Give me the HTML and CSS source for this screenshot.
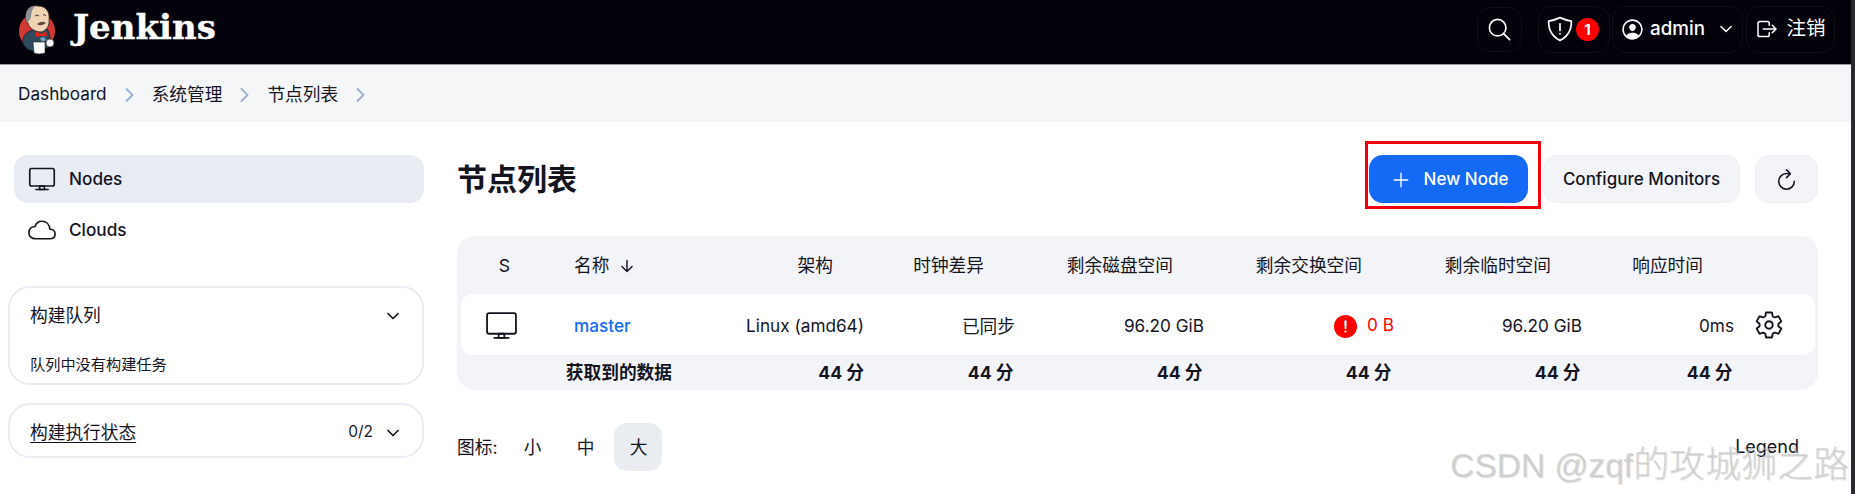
FILE: index.html
```html
<!DOCTYPE html>
<html lang="zh">
<head>
<meta charset="utf-8">
<title>节点列表 - Jenkins</title>
<link rel="stylesheet" href="styles.css">
</head>
<body>
<div class="app">
  <header class="topbar">
    <a class="brand">
      <svg class="logo" viewBox="15 0 45 56">
        <circle cx="37" cy="30" r="18" fill="#d33833"/>
        <path d="M23 43C22 35 27 30 33 29L47 28C50 32 51 39 49 46L36 51L27 48Z" fill="#2f4a5c" stroke="#15212b" stroke-width=".8"/>
        <path d="M26 17C25 8 31 4 38 5C46 5 50 11 49 18C50 25 46 30 41 31C35 31 29 27 28 22C26 21 26 19 26 17Z" fill="#efd3b4" stroke="#2a2320" stroke-width=".8"/>
        <path d="M26 18C25 9 30 5 35 5C32 8 31 12 31 16L29 20L27 21Z" fill="#8b8f93"/>
        <path d="M35 15q2-2 4 0M43 14q2-1 3 1" fill="none" stroke="#2a2320" stroke-width=".9"/>
        <path d="M37 23q5-4 9-1q-3 2-4 2q-3 1-5-1Z" fill="#5d4a3c"/>
        <path d="M36 30L41 33L46 30L47 35L41 35L36 36Z" fill="#e2231a"/>
        <path d="M40 37l4-1 2 3-4 2Z" fill="#6fa9c4"/>
        <path d="M33 41L45 41L45 52Q39 54 34 52Z" fill="#fff" stroke="#222" stroke-width=".6"/>
        <circle cx="50" cy="42" r="4" fill="#f4f4f4" stroke="#222" stroke-width=".6"/>
      </svg>
      <span class="wordmark">Jenkins</span>
    </a>
    <div class="tools">
      <a class="tool tool-search">
        <svg class="ico ico-search" viewBox="0 0 512 512"><path d="M221.09 64a157.09 157.09 0 10157.09 157.09A157.1 157.1 0 00221.09 64z"/><path d="M338.29 338.29L448 448"/></svg>
      </a>
      <a class="tool tool-shield">
        <svg class="ico ico-shield" viewBox="0 0 512 512"><path d="M463.1 112.37C373.68 96.33 336.71 84.45 256 48c-80.71 36.45-117.68 48.33-207.1 64.37C32.7 369.13 240.58 457.79 256 464c15.42-6.21 223.3-94.87 207.1-351.63z"/><path d="M256 160v120"/><path d="M256 340v4"/></svg>
        <span class="badge">1</span>
      </a>
      <a class="tool tool-user">
        <svg class="ico-fill ico-person" viewBox="0 0 512 512"><path d="M258.9 48C141.92 46.42 46.42 141.92 48 258.9c1.56 112.19 92.91 203.54 205.1 205.1 116.98 1.58 212.48-93.92 210.9-210.9C462.44 140.81 371.09 49.46 258.9 48zm126.42 327.25a4 4 0 01-6.14-.32 124.27 124.27 0 00-32.35-29.59C321.37 329 289.11 320 256 320s-65.37 9-90.83 25.34a124.24 124.24 0 00-32.35 29.58 4 4 0 01-6.14.32A175.32 175.32 0 0180 259c-1.63-97.31 78.22-178.76 175.57-179S432 158.81 432 256a175.32 175.32 0 01-46.68 119.25z"/><path d="M256 144c-19.72 0-37.55 7.39-50.22 20.82s-19 32-17.57 51.93C191.11 256 221.52 288 256 288s64.83-32 67.79-71.24c1.48-19.74-4.8-38.14-17.68-51.82C293.39 151.44 275.59 144 256 144z"/></svg>
        <span>admin</span>
        <svg class="ico ico-chev-head" viewBox="0 0 512 512"><path d="M112 184l144 144 144-144"/></svg>
      </a>
      <a class="tool tool-logout">
        <svg class="ico ico-logout" viewBox="0 0 512 512"><path d="M304 336v40a40 40 0 01-40 40H104a40 40 0 01-40-40V136a40 40 0 0140-40h152c22.09 0 48 17.91 48 40v40M368 336l80-80-80-80M176 256h256"/></svg>
        <span class="logout-text">注销</span>
      </a>
    </div>
  </header>

  <nav class="crumbs">
    <a>Dashboard</a>
    <svg class="crumb-sep" viewBox="0 0 9 14"><path d="M1.5 1l6 6-6 6"/></svg>
    <a class="cjk">系统管理</a>
    <svg class="crumb-sep" viewBox="0 0 9 14"><path d="M1.5 1l6 6-6 6"/></svg>
    <a class="cjk">节点列表</a>
    <svg class="crumb-sep" viewBox="0 0 9 14"><path d="M1.5 1l6 6-6 6"/></svg>
  </nav>

  <div class="content">
    <aside class="side">
      <div class="side-nav">
        <a class="side-item is-active">
          <svg class="ico ico-monitor" viewBox="0 0 512 512"><rect x="32" y="64" width="448" height="320" rx="32" ry="32"/><path d="M304 448l-8-64h-80l-8 64h96z"/><path d="M368 448H144"/></svg>
          <span>Nodes</span>
        </a>
        <a class="side-item">
          <svg class="ico ico-cloud" viewBox="0 0 512 512"><path d="M400 240c-8.89-89.54-71-144-144-144-69 0-113.44 48.2-128 96C68 198 16 235.59 16 304c0 66 54 112 120 112h260c55 0 100-27.44 100-88 0-59.82-53-85.76-96-88z"/></svg>
          <span>Clouds</span>
        </a>
      </div>
      <section class="card card-queue">
        <div class="card-head">
          <span class="cjk">构建队列</span>
          <svg class="ico ico-chev" viewBox="0 0 512 512"><path d="M112 184l144 144 144-144"/></svg>
        </div>
        <p class="card-note">队列中没有构建任务</p>
      </section>
      <section class="card card-exec">
        <div class="card-head">
          <a class="card-link cjk">构建执行状态</a>
          <span class="card-count">0/2</span>
          <svg class="ico ico-chev" viewBox="0 0 512 512"><path d="M112 184l144 144 144-144"/></svg>
        </div>
      </section>
    </aside>

    <main class="main">
      <div class="title-row">
        <h1>节点列表</h1>
        <div class="actions">
          <a class="btn btn-primary">
            <svg class="ico ico-plus" viewBox="0 0 512 512"><path d="M256 112v288M400 256H112"/></svg>
            <span>New Node</span>
            <span class="callout"></span>
          </a>
          <a class="btn btn-light">Configure Monitors</a>
          <a class="btn btn-light btn-icon">
            <svg class="ico ico-refresh" viewBox="0 0 512 512"><path d="M320 146s24.36-12-64-12a160 160 0 10160 160"/><path d="M256 58l80 80-80 80"/></svg>
          </a>
        </div>
      </div>

      <div class="table-wrap">
        <table class="nodes">
          <colgroup>
            <col class="c-s"><col class="c-name"><col class="c-arch"><col class="c-clock"><col class="c-num"><col class="c-num"><col class="c-num"><col class="c-resp"><col class="c-gear">
          </colgroup>
          <thead>
            <tr>
              <th class="center">S</th>
              <th class="name-h">名称<svg class="ico ico-sort" viewBox="0 0 512 512"><path d="M112 268l144 144 144-144M256 392V100"/></svg></th>
              <th>架构</th>
              <th>时钟差异</th>
              <th>剩余磁盘空间</th>
              <th>剩余交换空间</th>
              <th>剩余临时空间</th>
              <th>响应时间</th>
              <th></th>
            </tr>
          </thead>
          <tbody>
            <tr>
              <td class="center first"><svg class="ico ico-monitor-lg" viewBox="0 0 512 512"><rect x="32" y="64" width="448" height="320" rx="32" ry="32"/><path d="M304 448l-8-64h-80l-8 64h96z"/><path d="M368 448H144"/></svg></td>
              <td class="name-c"><a class="node-link">master</a></td>
              <td>Linux (amd64)</td>
              <td class="cjk">已同步</td>
              <td>96.20 GiB</td>
              <td class="danger">
                <svg class="ico-fill ico-alert" viewBox="48 48 416 416"><path d="M256 48C141.31 48 48 141.31 48 256s93.31 208 208 208 208-93.31 208-208S370.69 48 256 48zm0 319.91a20 20 0 1120-20 20 20 0 01-20 20zm21.72-201.15l-5.74 122a16 16 0 01-32 0l-5.74-121.94v-.05a21.74 21.74 0 1143.44 0z"/></svg>
                <span>0 B</span>
              </td>
              <td>96.20 GiB</td>
              <td>0ms</td>
              <td class="gear-c last"><svg class="ico ico-gear" viewBox="0 0 512 512"><path d="M262.29 192.31a64 64 0 1057.4 57.4 64.13 64.13 0 00-57.4-57.4zM416.39 256a154.34 154.34 0 01-1.53 20.79l45.21 35.46a10.81 10.81 0 012.45 13.75l-42.77 74a10.81 10.81 0 01-13.14 4.59l-44.9-18.08a16.11 16.11 0 00-15.17 1.75A164.48 164.48 0 01325 400.8a15.94 15.94 0 00-8.82 12.14l-6.73 47.89a11.08 11.08 0 01-10.68 9.17h-85.54a11.11 11.11 0 01-10.69-8.87l-6.72-47.82a16.07 16.07 0 00-9-12.22 155.3 155.3 0 01-21.46-12.57 16 16 0 00-15.11-1.71l-44.89 18.07a10.81 10.81 0 01-13.14-4.58l-42.77-74a10.8 10.8 0 012.45-13.75l38.21-30a16.05 16.05 0 006-14.08c-.36-4.17-.58-8.33-.58-12.5s.21-8.27.58-12.35a16 16 0 00-6.07-13.94l-38.19-30A10.81 10.81 0 0149.48 186l42.77-74a10.81 10.81 0 0113.14-4.59l44.9 18.08a16.11 16.11 0 0015.17-1.75A164.48 164.48 0 01187 111.2a15.94 15.94 0 008.82-12.14l6.73-47.89A11.08 11.08 0 01213.23 42h85.54a11.11 11.11 0 0110.69 8.87l6.72 47.82a16.07 16.07 0 009 12.22 155.3 155.3 0 0121.46 12.57 16 16 0 0015.11 1.71l44.89-18.07a10.81 10.81 0 0113.14 4.58l42.77 74a10.8 10.8 0 01-2.45 13.75l-38.21 30a16.05 16.05 0 00-6.05 14.08c.33 4.14.55 8.3.55 12.47z"/></svg></td>
            </tr>
          </tbody>
          <tfoot>
            <tr>
              <td colspan="2">获取到的数据</td>
              <td>44 分</td>
              <td>44 分</td>
              <td>44 分</td>
              <td>44 分</td>
              <td>44 分</td>
              <td>44 分</td>
              <td></td>
            </tr>
          </tfoot>
        </table>
      </div>

      <div class="icon-row">
        <div class="sizes">
          <span class="sizes-label">图标:</span>
          <a class="size">小</a>
          <a class="size">中</a>
          <a class="size is-on">大</a>
        </div>
        <a class="legend">Legend</a>
      </div>
    </main>
  </div>
  <div class="watermark"><span class="wm-latin">CSDN @zqf</span><span class="wm-cjk">的攻城狮之路</span></div>
</div>
<div class="edge"></div>
</body>
</html>
```

FILE: styles.css
```css
* { box-sizing: border-box; }
html, body { height: 100%; margin: 0; overflow: hidden; }
body {
  display: flex;
  font-family: Inter, "Noto Sans CJK SC", sans-serif;
  font-size: 17.2px;
  line-height: 1.3;
  color: #14141f;
  background: #fff;
}
.app { position: relative; flex: 1; min-width: 0; }
.edge { width: 4px; background: #2b2b2f; flex: none; }
.cjk { font-size: 17.7px; }

.ico { fill: none; stroke: currentColor; stroke-width: 32; stroke-linecap: round; stroke-linejoin: round; flex: none; }
.ico-fill { fill: currentColor; flex: none; }

/* top bar */
.topbar {
  height: 65px;
  display: flex;
  align-items: center;
  justify-content: space-between;
  padding: 0 16px 6px 15px;
  background: #030109;
  border-bottom: 1px solid #9a9aa0;
  color: #fff;
}
.brand { display: flex; align-items: center; height: 58px; }
.logo { width: 45px; height: 56px; flex: none; margin-top: -1px; }
.wordmark {
  margin-left: 13px;
  font-family: "DejaVu Serif", "Liberation Serif", serif;
  font-weight: 700;
  font-size: 34px;
  line-height: 1;
  position: relative;
  top: -2px;
  -webkit-text-stroke: .4px #fff;
}
.tools { display: flex; align-items: center; font-size: 18.8px; font-weight: 500; }
.tool {
  display: flex;
  align-items: center;
  justify-content: center;
  height: 47px;
  border: 1px solid #101015;
  border-radius: 14px;
}
.tool-search { width: 45px; margin-right: 16px; height: 45px; }
.tool-shield { width: 72px; margin-right: 2px; gap: 2px; justify-content: flex-start; padding-left: 7px; }
.tool-user { width: 131px; margin-right: 3px; }
.tool-logout { width: 89px; gap: 7px; }
.logout-text { font-size: 19.5px; font-weight: 400; }
.ico-search { width: 27px; height: 27px; }
.ico-shield { width: 28px; height: 28px; }
.badge {
  width: 23px;
  height: 23px;
  border-radius: 50%;
  background: #f00;
  font-size: 15px;
  font-weight: 700;
  line-height: 23px;
  text-align: center;
}
.ico-person { width: 25px; height: 25px; margin-right: 5px; }
.ico-chev-head { width: 18px; height: 18px; margin-left: 12px; stroke-width: 44; }
.ico-logout { width: 24px; height: 24px; }

/* breadcrumb */
.crumbs {
  height: 57px;
  display: flex;
  align-items: center;
  gap: 18px;
  padding: 2px 0 0 18px;
  background: #f4f6f8;
}
.crumb-sep { width: 9px; height: 14px; fill: none; stroke: #9bb0d0; stroke-width: 1.8; stroke-linecap: round; stroke-linejoin: round; }

/* layout */
.content { display: flex; padding: 33px 33px 0 8px; }
.side { width: 416px; flex: none; }
.main { flex: 1; min-width: 0; margin-left: 33px; }

/* sidebar */
.side-nav { display: flex; flex-direction: column; gap: 3px; margin: 0 0 32px 6px; }
.side-item {
  height: 48px;
  display: flex;
  align-items: center;
  gap: 13px;
  padding-left: 14px;
  border-radius: 14px;
  font-weight: 450;
}
.is-active { background: #e8ecf3; }
.ico-monitor { width: 28px; height: 28px; stroke-width: 30; }
.ico-cloud { width: 28px; height: 28px; stroke-width: 30; }
.card { border: 2px solid #e8ecf3; border-radius: 22px; padding: 0 26px 0 20px; }
.card-queue { height: 99px; margin-bottom: 18px; }
.card-exec { height: 55px; display: flex; align-items: center; padding-top: 4px; }
.card-queue .card-head { padding-top: 16px; }
.card-head { display: flex; align-items: center; width: 100%; font-weight: 400; }
.card-head > :first-child { margin-right: auto; }
.card-link { text-decoration: underline; text-underline-offset: 3px; }
.card-count { font-size: 15.5px; margin-right: 11px; }
.ico-chev { width: 18px; height: 18px; stroke-width: 46; margin-right: -6px; }
.card-note { margin: 28px 0 0; font-size: 15.2px; line-height: 20px; }

/* title row */
.title-row { display: flex; align-items: center; justify-content: space-between; height: 48px; margin-bottom: 33px; }
h1 { margin: 0; font-size: 30px; font-weight: 700; line-height: 40px; }
.actions { display: flex; gap: 15px; }
.btn {
  position: relative;
  height: 48px;
  display: flex;
  align-items: center;
  justify-content: center;
  border-radius: 14px;
  font-weight: 450;
}
.btn-primary { width: 159px; gap: 11px; background: #1469f5; color: #fff; font-size: 17px; padding-top: 1px; }
.btn-light { width: 197px; background: #f3f4f8; border: 1px solid #eef0f5; font-size: 17px; padding-top: 1px; }
.btn-icon { width: 63px; }
.ico-plus { width: 24px; height: 24px; stroke-width: 28; }
.ico-refresh { width: 25px; height: 25px; }
.callout {
  position: absolute;
  left: -4px;
  top: -14px;
  width: 176px;
  height: 68px;
  border: 3px solid #f0000f;
}

/* table */
.table-wrap { background: #f3f4f8; border-radius: 18px; padding: 0 3px 0 4px; height: 154px; width: 1361px; }
.nodes { border-collapse: separate; border-spacing: 0; table-layout: fixed; width: 1354px; }
.c-s { width: 87px; }
.c-name { width: 132px; }
.c-arch { width: 192px; }
.c-clock { width: 151px; }
.c-num { width: 189px; }
.c-resp { width: 152px; }
.c-gear { width: 73px; }
.nodes th, .nodes td { text-align: right; padding: 0 8px; white-space: nowrap; }
.nodes th { height: 58px; font-weight: 400; font-size: 17.7px; padding: 1px 39px 0 8px; }
.nodes th.center, .nodes td.center { text-align: center; padding: 0; }
.nodes td.center { padding-right: 7px; }
.nodes th.name-h, .nodes td.name-c { text-align: left; padding-left: 26px; padding-right: 0; }
.ico-sort { width: 18px; height: 18px; margin-left: 9px; vertical-align: -3px; stroke-width: 40; }
.nodes tbody td { height: 61px; background: #fff; padding-top: 3px; }
.first { border-radius: 12px 0 0 12px; }
.last { border-radius: 0 12px 12px 0; }
.nodes .gear-c { text-align: left; padding-left: 12px; padding-top: 1px; }
.nodes td svg { display: inline-block; vertical-align: middle; }
.nodes tbody td.center { padding-top: 1px; }
.ico-monitor-lg { width: 33px; height: 33px; stroke-width: 28; }
.ico-gear { width: 30px; height: 30px; }
.node-link { color: #1469f5; font-weight: 450; }
.danger { color: #f00; }
.ico-alert { width: 23px; height: 23px; margin-right: 5px; }
.nodes tbody .danger { padding-right: 7px; }
.nodes tfoot td { height: 35px; font-weight: 700; font-size: 17.7px; padding: 0 9.5px 0 0; }
.nodes tfoot td:nth-child(-n+2) { padding-right: 8px; }

/* icon size row */
.icon-row { display: flex; align-items: center; justify-content: space-between; margin-top: 33px; padding-right: 19px; width: 1361px; }
.sizes { display: flex; align-items: center; gap: 5px; font-size: 17.7px; }
.sizes-label { margin-right: 6px; }
.size { width: 48px; height: 48px; border-radius: 13px; display: flex; align-items: center; justify-content: center; }
.size.is-on { background: #e9edf2; }
.legend { font-size: 18px; }

/* screenshot watermark */
.watermark {
  position: absolute;
  left: 1450px;
  top: 440px;
  white-space: nowrap;
  line-height: 42px;
  color: rgba(195, 195, 195, .6);
  text-shadow: 1px 1px 1px rgba(0, 0, 0, .14);
  pointer-events: none;
}
.wm-latin { font-family: "Liberation Sans", sans-serif; font-size: 33.5px; }
.wm-cjk { font-family: "Noto Sans CJK SC", sans-serif; font-size: 36px; font-weight: 300; }
```
